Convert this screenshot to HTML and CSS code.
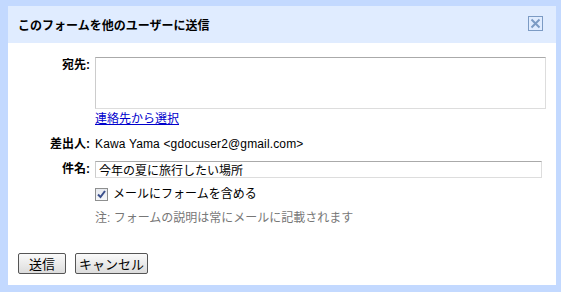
FILE: index.html
```html
<!DOCTYPE html>
<html lang="ja">
<head>
    <meta charset="UTF-8">
    <title>このフォームを他のユーザーに送信</title>
    <link rel="stylesheet" href="styles.css">
</head>
<body>

    <!-- Diálogo de envío -->
    <div class="dialog">
        <div class="dialog-header">
            <span class="dialog-title">このフォームを他のユーザーに送信</span>
            <span class="close-btn">
                <svg width="11" height="11" viewBox="0 0 11 11">
                    <path d="M1.5 1.5 L9.5 9.5 M9.5 1.5 L1.5 9.5" stroke="#7c9bc4" stroke-width="2"/>
                </svg>
            </span>
        </div>

        <div class="form">
            <div class="label">宛先:</div>
            <div class="field">
                <textarea class="to-box"></textarea>
                <a href="#" class="contacts-link">連絡先から選択</a>
            </div>

            <div class="label row-from">差出人:</div>
            <div class="field row-from sender">Kawa Yama &lt;gdocuser2@gmail.com&gt;</div>

            <div class="label row-subject">件名:</div>
            <div class="field row-subject">
                <input type="text" class="subject-box" value="今年の夏に旅行したい場所">
            </div>

            <div></div>
            <div class="field row-check">
                <span class="check">
                    <svg width="9" height="9" viewBox="0 0 9 9">
                        <path d="M1 4.5 L3.5 7 L8 1" stroke="#3a4f8c" stroke-width="2" fill="none"/>
                    </svg>
                </span>
                <span>メールにフォームを含める</span>
            </div>

            <div></div>
            <div class="field note">注: フォームの説明は常にメールに記載されます</div>
        </div>

        <div class="buttons">
            <button class="btn btn-send">送信</button>
            <button class="btn btn-cancel">キャンセル</button>
        </div>
    </div>

</body>
</html>
```

FILE: styles.css
```css
/* Estilos generales */
body {
    margin: 0;
    background-color: #c3d9ff;
    font-family: "Liberation Sans", "Noto Sans CJK JP", sans-serif;
    font-size: 12px;
    color: #000;
}

/* Caja del diálogo */
.dialog {
    margin: 6px 5px 7px 8px;
    height: 279px;
    background-color: #fff;
}

.dialog-header {
    display: flex;
    align-items: center;
    justify-content: space-between;
    height: 37px;
    padding: 0 13px 0 10px;
    background-color: #e0ecff;
}
.dialog-title {
    font-weight: bold;
}
.close-btn {
    display: flex;
    align-items: center;
    justify-content: center;
    width: 13px;
    height: 13px;
    margin-bottom: 2px;
    border: 1px solid #7c9bc4;
}

/* Formulario */
.form {
    display: grid;
    grid-template-columns: 82px 1fr;
    column-gap: 5px;
    padding: 14px 10px 0 0;
    line-height: 16px;
}
.label {
    text-align: right;
    font-weight: bold;
}
.field {
    min-width: 0;
}
.to-box {
    display: block;
    box-sizing: border-box;
    width: 451px;
    height: 52px;
    margin: 0 0 2px;
    border: 1px solid;
    border-color: #aaa #ddd #ddd #ccc;
    resize: none;
}
.contacts-link {
    color: #0000cc;
}
.row-from {
    margin-top: 9px;
}
.sender {
    letter-spacing: 0.15px;
}
.row-subject {
    margin-top: 9px;
}
.row-subject.label {
    line-height: 17px;
}
.subject-box {
    display: block;
    box-sizing: border-box;
    width: 447px;
    height: 17px;
    margin: 0;
    padding: 0 3px;
    border: 1px solid;
    border-color: #aaa #ddd #ddd #ccc;
    font-family: inherit;
    font-size: 12px;
}
.row-check {
    display: flex;
    align-items: center;
    gap: 5px;
    margin-top: 8px;
}
.check {
    display: flex;
    align-items: center;
    justify-content: center;
    box-sizing: border-box;
    width: 13px;
    height: 13px;
    border: 1px solid #8e8f8f;
    background: linear-gradient(#e6e9ef, #f6f7f9);
}
.note {
    margin-top: 8px;
    color: #777;
}

/* Botones */
.buttons {
    display: flex;
    gap: 9px;
    padding: 27px 0 0 10px;
}
.btn {
    height: 21px;
    padding: 0;
    border: 1px solid #555;
    border-radius: 2px;
    background: linear-gradient(#fafafa, #dcdcdc);
    font-family: inherit;
    font-size: 13px;
    color: #000;
}
.btn-send {
    width: 48px;
}
.btn-cancel {
    width: 73px;
}
```
